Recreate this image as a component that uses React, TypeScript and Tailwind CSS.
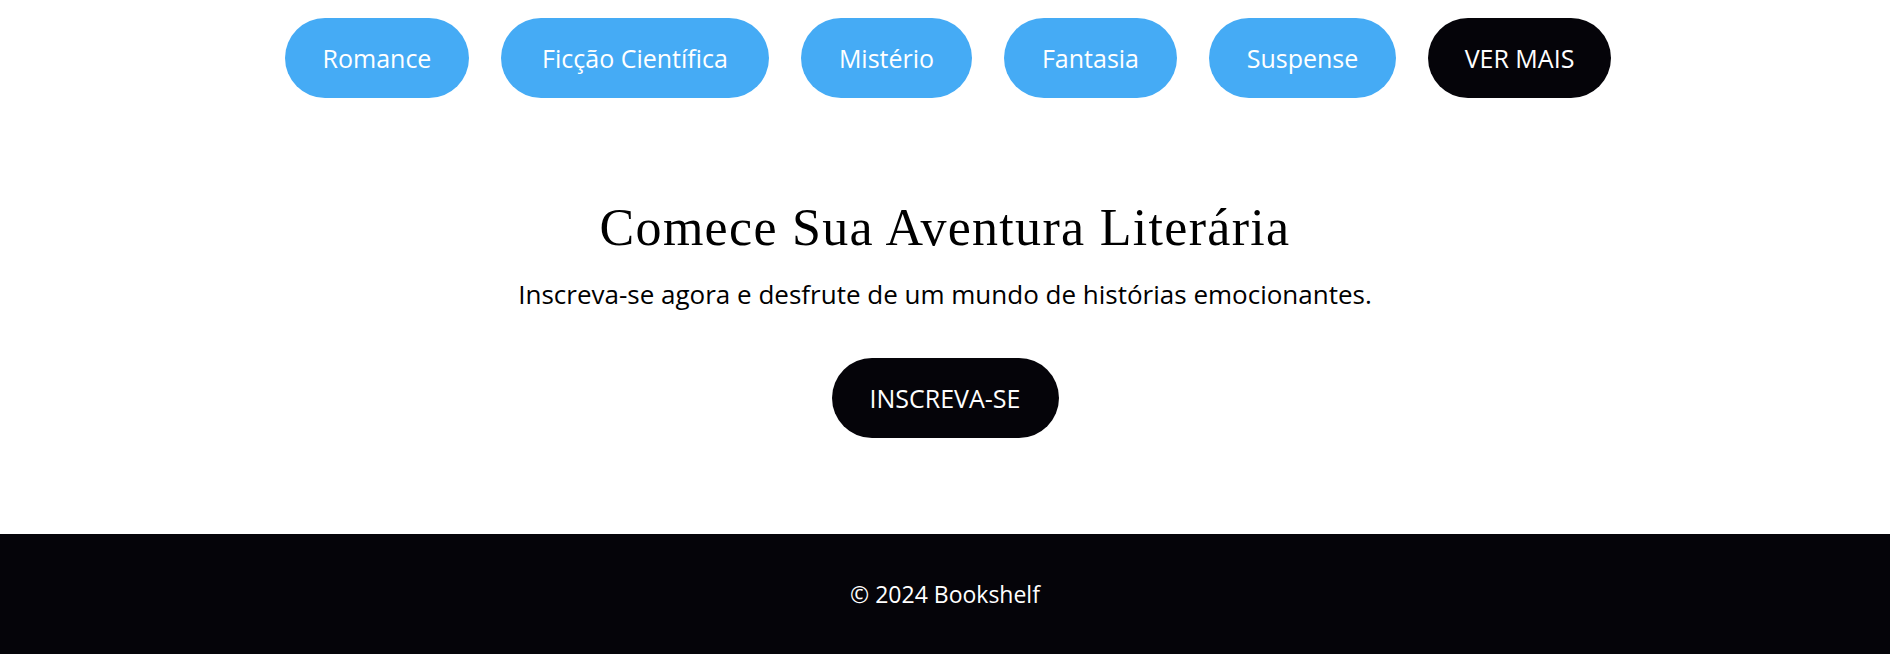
import React from "react";

const genres: { label: string; w: string }[] = [
  { label: "Romance", w: "w-[184px]" },
  { label: "Ficção Científica", w: "w-[268px]" },
  { label: "Mistério", w: "w-[171px]" },
  { label: "Fantasia", w: "w-[173px]" },
  { label: "Suspense", w: "w-[187px]" },
];

export default function App() {
  return (
    <div className="bg-white w-full" style={{ fontFamily: "'Open Sans', 'Noto Sans', sans-serif" }}>
      <section className="flex justify-center gap-[32px] pt-[18px] pl-[6px]">
        {genres.map((g) => (
          <button
            key={g.label}
            className={`${g.w} h-[80px] rounded-full bg-[#45abf5] text-white text-[25px] leading-none`}
          >
            {g.label}
          </button>
        ))}
        <button className="w-[183px] h-[80px] rounded-full bg-[#050409] text-white text-[25px] leading-none">
          VER MAIS
        </button>
      </section>

      <section className="flex flex-col items-center pt-[100px] pb-[96px]">
        <h2
          className="text-[52px] leading-[60px] text-black tracking-[1.3px]"
          style={{ fontFamily: "'Liberation Serif', serif" }}
        >
          Comece Sua Aventura Literária
        </h2>
        <p className="mt-[19px] text-[26px] leading-[34px] text-black">
          Inscreva-se agora e desfrute de um mundo de histórias emocionantes.
        </p>
        <button className="mt-[47px] w-[227px] h-[80px] rounded-full bg-[#050409] text-white text-[25px] leading-none">
          INSCREVA-SE
        </button>
      </section>

      <footer className="bg-[#050409] text-white flex justify-center pt-[42px] pb-[42px]">
        <p className="text-[23px] leading-[36px]">© 2024 Bookshelf</p>
      </footer>
    </div>
  );
}
